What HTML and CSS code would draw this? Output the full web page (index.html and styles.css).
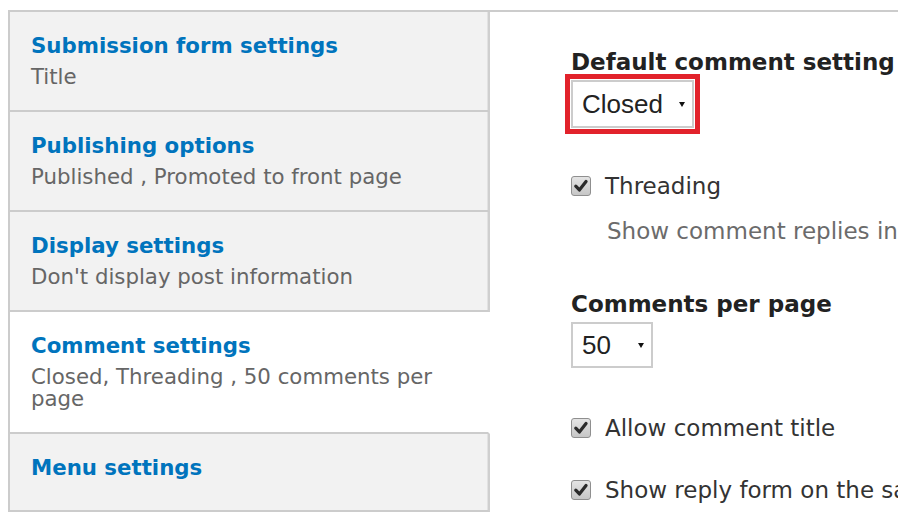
FILE: index.html
```html
<!DOCTYPE html>
<html lang="en">
<head>
<meta charset="utf-8">
<title>Comment settings</title>
<link rel="stylesheet" href="styles.css">
</head>
<body>
<div class="frame">
  <ul class="tabs">
    <li class="tab">
      <a class="tab-title" href="#">Submission form settings</a>
      <div class="tab-summary">Title</div>
    </li>
    <li class="tab">
      <a class="tab-title" href="#">Publishing options</a>
      <div class="tab-summary">Published , Promoted to front page</div>
    </li>
    <li class="tab">
      <a class="tab-title" href="#">Display settings</a>
      <div class="tab-summary">Don't display post information</div>
    </li>
    <li class="tab tab-active">
      <a class="tab-title" href="#">Comment settings</a>
      <div class="tab-summary">Closed, Threading , 50 comments per page</div>
    </li>
    <li class="tab tab-last">
      <a class="tab-title" href="#">Menu settings</a>
    </li>
  </ul>
  <div class="pane">
    <div class="field-label">Default comment setting</div>
    <div class="select select-closed highlight">
      <span class="select-value">Closed</span>
      <span class="select-arrow"></span>
    </div>
    <div class="check-row check-threading">
      <span class="checkbox"><svg viewBox="0 0 20 20" width="20" height="20"><path d="M4.2 10.2 L8.2 14.4 L15.6 5" fill="none" stroke="#2b2b2b" stroke-width="3.6" stroke-linecap="round" stroke-linejoin="round"/></svg></span>
      <span class="check-label">Threading</span>
    </div>
    <div class="description">Show comment replies in a threaded list.</div>
    <div class="field-label label-perpage">Comments per page</div>
    <div class="select select-50">
      <span class="select-value">50</span>
      <span class="select-arrow"></span>
    </div>
    <div class="check-row check-title">
      <span class="checkbox"><svg viewBox="0 0 20 20" width="20" height="20"><path d="M4.2 10.2 L8.2 14.4 L15.6 5" fill="none" stroke="#2b2b2b" stroke-width="3.6" stroke-linecap="round" stroke-linejoin="round"/></svg></span>
      <span class="check-label">Allow comment title</span>
    </div>
    <div class="check-row check-reply">
      <span class="checkbox"><svg viewBox="0 0 20 20" width="20" height="20"><path d="M4.2 10.2 L8.2 14.4 L15.6 5" fill="none" stroke="#2b2b2b" stroke-width="3.6" stroke-linecap="round" stroke-linejoin="round"/></svg></span>
      <span class="check-label">Show reply form on the same page as comments</span>
    </div>
  </div>
</div>
</body>
</html>
```

FILE: styles.css
```css
html, body {
  margin: 0;
  padding: 0;
  background: #fff;
}

body {
  font-family: "DejaVu Sans", "Liberation Sans", sans-serif;
  overflow: hidden;
  height: 512px;
}

.frame {
  margin: 10px 0 0 8px;
  border-top: 2px solid #cccccc;
  border-left: 2px solid #cccccc;
  display: flex;
  align-items: flex-start;
}

.tabs {
  list-style: none;
  margin: 0;
  padding: 0;
  width: 480px;
  flex: none;
}

.tab {
  background: #f2f2f2;
  border-bottom: 2px solid #cccccc;
  border-right: 2px solid #cfcfcf;
  box-shadow: inset -1px 0 0 #e2e2e2;
  padding: 22px 21px 22px 21px;
}

.tab-active {
  background: #fff;
  border-right-color: #fff;
  box-shadow: none;
}

.tab-last {
  padding-bottom: 30px;
}

.tab-title {
  display: block;
  color: #0074bd;
  text-decoration: none;
  font-weight: bold;
  font-size: 21.3px;
  line-height: 24px;
}

.tab-summary {
  margin-top: 8px;
  color: #666666;
  font-size: 21.3px;
  line-height: 22px;
}

.pane {
  flex: 1;
  min-width: 0;
  padding: 36px 0 0 81px;
  white-space: nowrap;
  overflow: hidden;
}

.field-label {
  color: #222222;
  font-weight: bold;
  font-size: 23px;
  line-height: 28px;
}

.label-perpage {
  margin-top: 45px;
}

.select {
  margin-top: 4px;
  box-sizing: border-box;
  height: 47px;
  border: 2px solid #cccccc;
  display: flex;
  align-items: center;
  font-family: "Liberation Sans", Arial, sans-serif;
  font-size: 26px;
  color: #222;
  padding-left: 9px;
}

.select-closed {
  width: 123px;
  height: 48px;
}

.select-50 {
  width: 82px;
  height: 46px;
}

.highlight {
  outline: 5px solid #e2222b;
  outline-offset: 1px;
}

.select-value {
  flex: 1;
}

.select-arrow {
  width: 0;
  height: 0;
  border-left: 3px solid transparent;
  border-right: 3px solid transparent;
  border-top: 5px solid #111;
  margin-right: 7px;
}

.check-row {
  display: flex;
  align-items: center;
  height: 28px;
  font-size: 23px;
  color: #333333;
}

.check-threading {
  margin-top: 44px;
}

.check-title {
  margin-top: 46px;
}

.check-reply {
  margin-top: 34px;
}

.checkbox {
  box-sizing: border-box;
  width: 20px;
  height: 20px;
  border: 1px solid #8f8f8f;
  border-radius: 3px;
  background: linear-gradient(#e4e4e4, #c6c6c6);
  margin-right: 14px;
  display: flex;
  align-items: center;
  justify-content: center;
  flex: none;
}

.checkbox svg {
  display: block;
  width: 18px;
  height: 18px;
}

.description {
  margin-top: 17px;
  padding-left: 36px;
  color: #6b6b6b;
  font-size: 23px;
  line-height: 28px;
}
```
